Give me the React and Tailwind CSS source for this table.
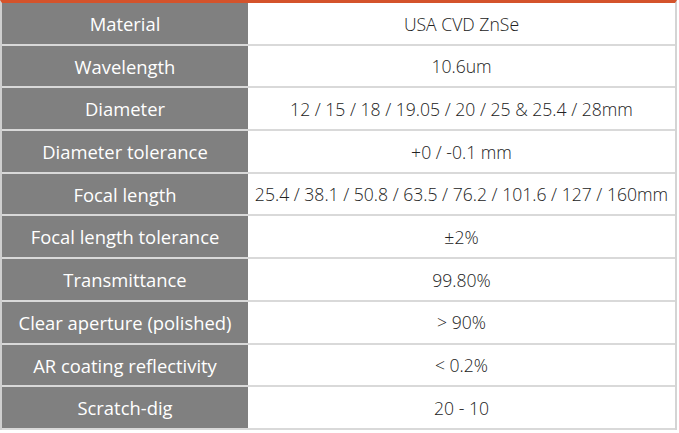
const specs = [
  ['Material', 'USA CVD ZnSe'],
  ['Wavelength', '10.6um'],
  ['Diameter', '12 / 15 / 18 / 19.05 / 20 / 25 & 25.4 / 28mm'],
  ['Diameter tolerance', '+0 / -0.1 mm'],
  ['Focal length', '25.4 / 38.1 / 50.8 / 63.5 / 76.2 / 101.6 / 127 / 160mm'],
  ['Focal length tolerance', '±2%'],
  ['Transmittance', '99.80%'],
  ['Clear aperture (polished)', '> 90%'],
  ['AR coating reflectivity', '< 0.2%'],
  ['Scratch-dig', '20 - 10'],
];

export default function App() {
  return (
    <div className="w-[679px] h-[433px] bg-white" style={{ fontFamily: '"Open Sans", "Noto Sans", sans-serif' }}>
      <div className="w-[677px] border-t-[3px] border-t-[#d4532b] border-l-2 border-l-[#cfcfcf] border-r-2 border-r-[#d4d4d4]">
        {specs.map(([label, value]) => (
          <div key={label} className="grid grid-cols-[246px_1fr] h-[42.7px] border-b-2 border-[#d9d9d9]">
            <div className="bg-[#808080] text-white text-[18.4px] flex items-center justify-center pt-px">
              {label}
            </div>
            <div className="text-[#222] text-[17.6px] font-light flex items-center justify-center whitespace-nowrap pt-px">
              {value}
            </div>
          </div>
        ))}
      </div>
    </div>
  );
}
